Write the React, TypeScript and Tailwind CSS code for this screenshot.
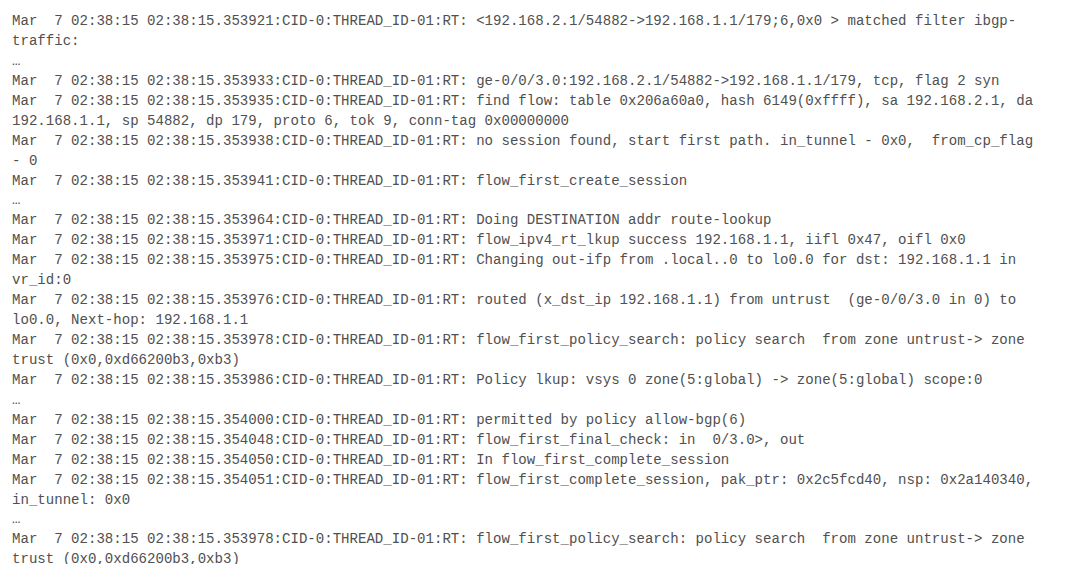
const lines: string[] = [
  "Mar  7 02:38:15 02:38:15.353921:CID-0:THREAD_ID-01:RT: <192.168.2.1/54882->192.168.1.1/179;6,0x0 > matched filter ibgp-",
  "traffic:",
  "…",
  "Mar  7 02:38:15 02:38:15.353933:CID-0:THREAD_ID-01:RT: ge-0/0/3.0:192.168.2.1/54882->192.168.1.1/179, tcp, flag 2 syn",
  "Mar  7 02:38:15 02:38:15.353935:CID-0:THREAD_ID-01:RT: find flow: table 0x206a60a0, hash 6149(0xffff), sa 192.168.2.1, da",
  "192.168.1.1, sp 54882, dp 179, proto 6, tok 9, conn-tag 0x00000000",
  "Mar  7 02:38:15 02:38:15.353938:CID-0:THREAD_ID-01:RT: no session found, start first path. in_tunnel - 0x0,  from_cp_flag",
  "- 0",
  "Mar  7 02:38:15 02:38:15.353941:CID-0:THREAD_ID-01:RT: flow_first_create_session",
  "…",
  "Mar  7 02:38:15 02:38:15.353964:CID-0:THREAD_ID-01:RT: Doing DESTINATION addr route-lookup",
  "Mar  7 02:38:15 02:38:15.353971:CID-0:THREAD_ID-01:RT: flow_ipv4_rt_lkup success 192.168.1.1, iifl 0x47, oifl 0x0",
  "Mar  7 02:38:15 02:38:15.353975:CID-0:THREAD_ID-01:RT: Changing out-ifp from .local..0 to lo0.0 for dst: 192.168.1.1 in",
  "vr_id:0",
  "Mar  7 02:38:15 02:38:15.353976:CID-0:THREAD_ID-01:RT: routed (x_dst_ip 192.168.1.1) from untrust  (ge-0/0/3.0 in 0) to",
  "lo0.0, Next-hop: 192.168.1.1",
  "Mar  7 02:38:15 02:38:15.353978:CID-0:THREAD_ID-01:RT: flow_first_policy_search: policy search  from zone untrust-> zone",
  "trust (0x0,0xd66200b3,0xb3)",
  "Mar  7 02:38:15 02:38:15.353986:CID-0:THREAD_ID-01:RT: Policy lkup: vsys 0 zone(5:global) -> zone(5:global) scope:0",
  "…",
  "Mar  7 02:38:15 02:38:15.354000:CID-0:THREAD_ID-01:RT: permitted by policy allow-bgp(6)",
  "Mar  7 02:38:15 02:38:15.354048:CID-0:THREAD_ID-01:RT: flow_first_final_check: in  0/3.0>, out",
  "Mar  7 02:38:15 02:38:15.354050:CID-0:THREAD_ID-01:RT: In flow_first_complete_session",
  "Mar  7 02:38:15 02:38:15.354051:CID-0:THREAD_ID-01:RT: flow_first_complete_session, pak_ptr: 0x2c5fcd40, nsp: 0x2a140340,",
  "in_tunnel: 0x0",
  "…",
  "Mar  7 02:38:15 02:38:15.353978:CID-0:THREAD_ID-01:RT: flow_first_policy_search: policy search  from zone untrust-> zone",
  "trust (0x0,0xd66200b3,0xb3)",
];

export default function App() {
  return (
    <div className="h-[564px] w-[1077px] overflow-hidden bg-white pl-[12px] pt-[12px]">
      <div className="font-['Liberation_Mono','Courier_New',monospace] text-[14.07px] leading-[19.93px] text-[#505050]">
        {lines.map((line, i) => (
          <div key={i} className="whitespace-pre">
            {line}
          </div>
        ))}
      </div>
    </div>
  );
}
